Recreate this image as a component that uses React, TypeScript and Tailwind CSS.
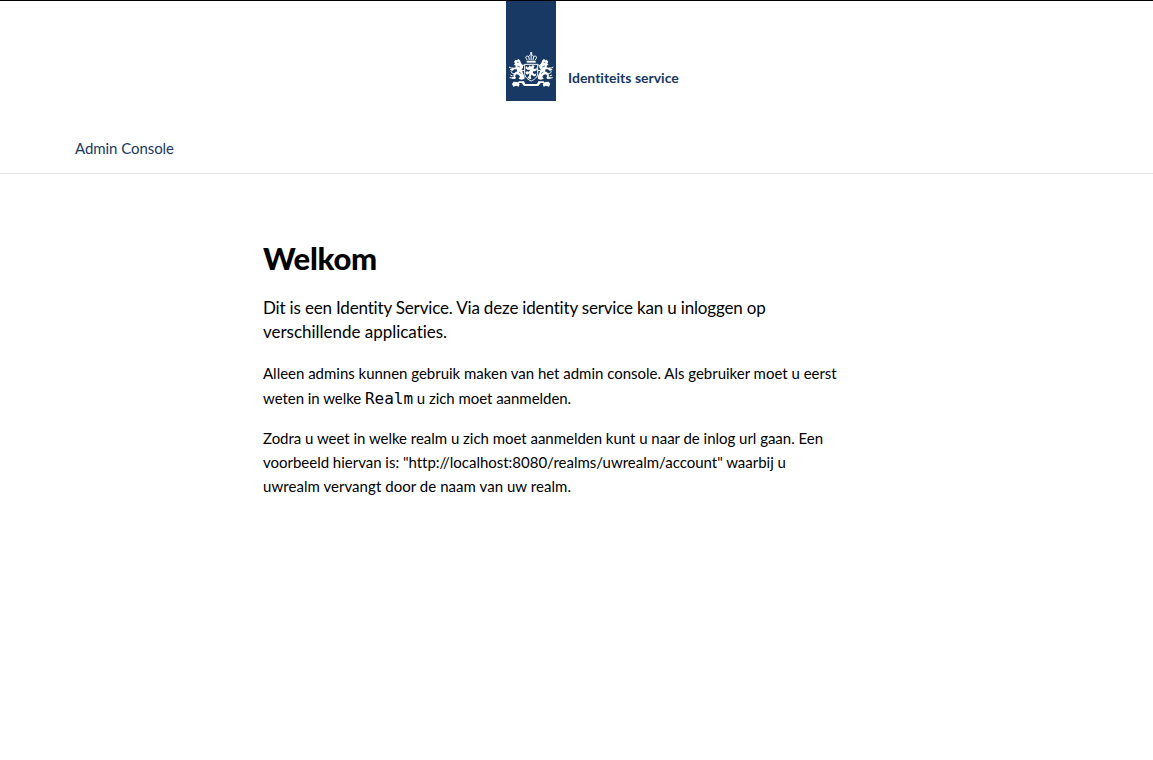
function Lion() {
  return (
    <g>
      <path
        fill="#fff"
        d="M24 47 L29 41 L33 43 L37 39 L42 43 L44 49 L47 54 L51 57 V66 L47 69 L49 76 L51 82 L56 92 L55 99 L46 101 L38 98 L42 92 L38 86 L31 85 L27 90 L30 95 L27 99 L17 98 L18 94 L23 93 L22 86 L28 79 L34 76 L32 70 L25 70 L19 75 L15 72 L20 66 L29 64 L28 58 L23 57 L27 53 Z"
      />
      <g fill="none" stroke="#fff" strokeWidth="3">
        <path d="M9 63 L15 66 L22 66 M12 71 L20 69" />
        <path d="M30 82 C20 84 13 80 16 74 M13 87 L20 90 M11 95 L19 96" />
        <path d="M46 61 L56 56 M47 73 L56 74" />
      </g>
      <path d="M33 49 H38 M34 60 L42 63 M39 78 L46 83" fill="none" stroke="#173963" strokeWidth="2" />
    </g>
  );
}

function Crest() {
  return (
    <svg className="mt-[45px] block h-[46px] w-[50px]" viewBox="0 0 150 138" aria-hidden="true">
      <Lion />
      <g transform="matrix(-1 0 0 1 151 0)">
        <Lion />
      </g>
      <g fill="none" stroke="#fff" strokeWidth="3">
        <path d="M75.5 18 V27 M72 21 H79" />
        <path d="M64 42 C55 34 61 27 68 32 C69 25 82 25 83 32 C90 27 96 34 87 42" />
        <path d="M75.5 28 V42 M68 32 L70 42 M83 32 L81 42" strokeWidth="3" />
        <path d="M62 47 H89" strokeWidth="6" />
        <path d="M56 55 H95 V82 C95 95 84 101 75.5 105 C67 101 56 95 56 82 Z" />
      </g>
      <g fill="#fff">
        <path d="M66 65 L71 58 L75 62 L80 57 L86 60 L82 67 L88 70 L91 64 L93 72 L87 76 L83 75 L80 80 L86 85 L91 82 L89 90 L83 91 L77 86 L74 91 L76 98 L70 99 L64 94 L69 90 L70 82 L63 86 L58 80 L62 76 L69 77 L72 71 L64 71 L59 67 L60 60 Z" />
        <path d="M38 106 H54 L58 114 H93 L97 106 H113 L116 111 H104 L97 120 H54 L47 111 H35 Z" />
        <path d="M18 114 L23 107 L34 108 L41 114 L38 122 L31 119 L22 122 Z M133 114 L128 107 L117 108 L110 114 L113 122 L120 119 L129 122 Z" />
      </g>
    </svg>
  );
}

export default function App() {
  return (
    <div className="min-h-[760px] overflow-hidden border-t border-black bg-white font-['Lato',sans-serif] text-black [font-variant-ligatures:none]">
      <header className="flex h-[173px] flex-col border-b border-[#e1e5ea] text-[#173963]">
        <div className="flex h-[100px] pl-[506px]">
          <div className="h-[100px] w-[50px] shrink-0 bg-[#173963]">
            <Crest />
          </div>
          <span className="ml-3 mt-[67px] whitespace-nowrap text-[14px] leading-5 font-bold">Identiteits service</span>
        </div>
        <nav className="flex pl-[75px] pt-[35px]">
          <a className="whitespace-nowrap text-[15px] leading-6 tracking-[-0.06px]">Admin Console</a>
        </nav>
      </header>
      <main className="ml-[263px] w-[640px] whitespace-nowrap pt-16">
        <h1 className="text-[31px] leading-10 font-black tracking-[-0.25px]">Welkom</h1>
        <p className="mt-[18px] text-[17px] leading-6 tracking-[-0.17px]">
          <span className="block">Dit is een Identity Service. Via deze identity service kan u inloggen op</span>
          <span className="block tracking-[-0.02px]">verschillende applicaties.</span>
        </p>
        <p className="mt-[17px] text-[15px] leading-6 tracking-[-0.015px]">
          <span className="block">Alleen admins kunnen gebruik maken van het admin console. Als gebruiker moet u eerst</span>
          <span className="block h-[25px] pt-px leading-6 tracking-[-0.04px]">
            weten in welke <code className="font-['DejaVu_Sans_Mono',monospace] text-[16px] leading-4">Realm</code> u zich moet aanmelden.
          </span>
        </p>
        <p className="mt-4 text-[15px] leading-6">
          <span className="block tracking-[-0.025px]">Zodra u weet in welke realm u zich moet aanmelden kunt u naar de inlog url gaan. Een</span>
          <span className="block tracking-[-0.015px]">voorbeeld hiervan is: "http://localhost:8080/realms/uwrealm/account" waarbij u</span>
          <span className="block tracking-[0.05px]">uwrealm vervangt door de naam van uw realm.</span>
        </p>
      </main>
    </div>
  );
}
